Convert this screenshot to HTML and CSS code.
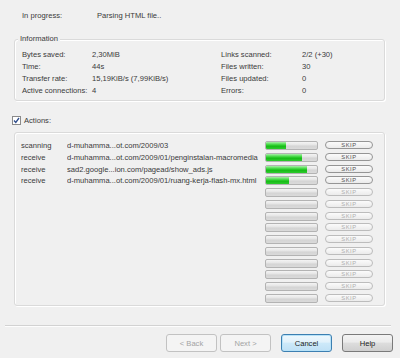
FILE: index.html
```html
<!DOCTYPE html>
<html>
<head>
<meta charset="utf-8">
<link rel="stylesheet" href="styles.css">
</head>
<body>
<div class="wiz">
  <div class="status"><span>In progress:</span><span>Parsing HTML file..</span></div>

  <div class="group info">
    <span class="legend">Information</span>
    <div class="info-grid">
      <span>Bytes saved:</span><span>2,30MiB</span><span>Links scanned:</span><span>2/2 (+30)</span>
      <span>Time:</span><span>44s</span><span>Files written:</span><span>30</span>
      <span>Transfer rate:</span><span>15,19KiB/s (7,99KiB/s)</span><span>Files updated:</span><span>0</span>
      <span>Active connections:</span><span>4</span><span>Errors:</span><span>0</span>
    </div>
  </div>

  <div class="chk-row">
    <svg class="chk" width="9" height="9" viewBox="0 0 9 9">
      <rect x="0.5" y="0.5" width="8" height="8" fill="#fff" stroke="#8a8a8a"/>
      <path d="M2 4.5 L3.8 6.5 L7 2" fill="none" stroke="#2f4d8c" stroke-width="1.3"/>
    </svg>
    <span>Actions:</span>
  </div>

  <div class="group actions">
    <div class="act-grid">
      <span class="act">scanning</span><span class="url">d-muhamma...ot.com/2009/03</span><div class="bar"><div class="fill" style="width:40%"></div></div><div class="skip on">SKIP</div>
      <span class="act">receive</span><span class="url">d-muhamma...ot.com/2009/01/penginstalan-macromedia</span><div class="bar"><div class="fill" style="width:70%"></div></div><div class="skip on">SKIP</div>
      <span class="act">receive</span><span class="url">sad2.google...ion.com/pagead/show_ads.js</span><div class="bar"><div class="fill" style="width:80%"></div></div><div class="skip on">SKIP</div>
      <span class="act">receive</span><span class="url">d-muhamma...ot.com/2009/01/ruang-kerja-flash-mx.html</span><div class="bar"><div class="fill" style="width:45%"></div></div><div class="skip on">SKIP</div>
      <span></span><span></span><div class="bar"></div><div class="skip">SKIP</div>
      <span></span><span></span><div class="bar"></div><div class="skip">SKIP</div>
      <span></span><span></span><div class="bar"></div><div class="skip">SKIP</div>
      <span></span><span></span><div class="bar"></div><div class="skip">SKIP</div>
      <span></span><span></span><div class="bar"></div><div class="skip">SKIP</div>
      <span></span><span></span><div class="bar"></div><div class="skip">SKIP</div>
      <span></span><span></span><div class="bar"></div><div class="skip">SKIP</div>
      <span></span><span></span><div class="bar"></div><div class="skip">SKIP</div>
      <span></span><span></span><div class="bar"></div><div class="skip">SKIP</div>
      <span></span><span></span><div class="bar"></div><div class="skip">SKIP</div>
    </div>
  </div>

  <div class="sep"></div>

  <div class="btns">
    <div class="nav">
      <button class="btn dis">&lt; Back</button>
      <button class="btn dis">Next &gt;</button>
    </div>
    <button class="btn def">Cancel</button>
    <button class="btn">Help</button>
  </div>
</div>
</body>
</html>
```
FILE: styles.css
```css
html, body {
  margin: 0;
  padding: 0;
  background: #f0f0f0;
}
body {
  width: 400px;
  height: 358px;
  overflow: hidden;
  font-family: "Liberation Sans", Arial, sans-serif;
  font-size: 7.6px;
  color: #3a3a3a;
}
.wiz {
  display: flex;
  flex-direction: column;
}
.status {
  display: grid;
  grid-template-columns: 75px auto;
  padding: 10px 0 0 22px;
  line-height: 12px;
  height: 12px;
}
.group {
  position: relative;
  box-sizing: border-box;
  margin-left: 14px;
  width: 371px;
  border: 1px solid #dadada;
  border-radius: 3px;
  box-shadow: inset 1px 1px 0 #fff, 1px 1px 0 #fff;
}
.legend {
  position: absolute;
  top: -6px;
  left: 3px;
  padding: 0 2px;
  background: #f0f0f0;
  line-height: 10px;
  color: #3a3a3a;
}
.info {
  margin-top: 17px;
  height: 62px;
  padding: 9px 0 0 7px;
}
.info-grid {
  display: grid;
  grid-template-columns: 70px 129px 81px auto;
  grid-auto-rows: 12px;
  line-height: 12px;
  white-space: nowrap;
}
.chk-row {
  display: flex;
  align-items: center;
  gap: 3px;
  margin: 15px 0 0 12px;
  height: 9px;
  line-height: 9px;
}
.chk { display: block; }
.actions {
  margin-top: 7px;
  height: 174px;
  padding: 8px 0 0 6px;
}
.act-grid {
  display: grid;
  grid-template-columns: 46px 195px 53px 48px;
  grid-template-rows: repeat(14, 11.75px);
  align-items: start;
}
.act, .url {
  line-height: 10px;
  white-space: nowrap;
  overflow: hidden;
}
.url { width: 194px; }
.bar {
  box-sizing: border-box;
  margin-left: 3px;
  width: 53px;
  height: 9px;
  border: 1px solid #b3b3b3;
  border-radius: 2px;
  background: linear-gradient(#f4f4f4, #e4e4e4 45%, #d4d4d4 55%, #dadada);
  overflow: hidden;
}
.fill {
  height: 100%;
  background: linear-gradient(#a9efa9, #3bd63b 40%, #17bb17 60%, #2ecb2e);
}
.skip {
  box-sizing: border-box;
  margin-left: 10px;
  width: 48px;
  height: 8px;
  border: 1px solid #bcbcbc;
  border-radius: 4px;
  background: linear-gradient(#fbfbfb, #ebebeb);
  font-size: 5.8px;
  line-height: 6px;
  letter-spacing: 0.6px;
  text-align: center;
  color: #b0b0b0;
}
.skip.on {
  border-color: #959595;
  color: #555;
}
.sep {
  margin: 19px 0 0 5px;
  width: 386px;
  height: 0;
  border-top: 1px solid #d2d2d2;
  border-bottom: 1px solid #fdfdfd;
}
.btns {
  display: flex;
  gap: 10px;
  margin: 7px 0 0 166px;
}
.nav {
  display: flex;
  gap: 3px;
}
.btn {
  box-sizing: border-box;
  width: 51px;
  height: 18px;
  padding: 0;
  border: 1px solid #7a7a7a;
  border-radius: 3px;
  background: linear-gradient(#f3f3f3, #ebebeb 45%, #dddddd 50%, #cfcfcf);
  font-family: "Liberation Sans", Arial, sans-serif;
  font-size: 7.6px;
  color: #222;
}
.btn.dis {
  border-color: #c2c2c2;
  background: #f4f4f4;
  color: #a3a3a3;
}
.btn.def {
  border-color: #3c7fb1;
  box-shadow: inset 0 0 0 1px #b7e2f8;
  background: linear-gradient(#eef8fd, #e1f1fb 45%, #cde9f9 50%, #bfe0f5);
}
```
